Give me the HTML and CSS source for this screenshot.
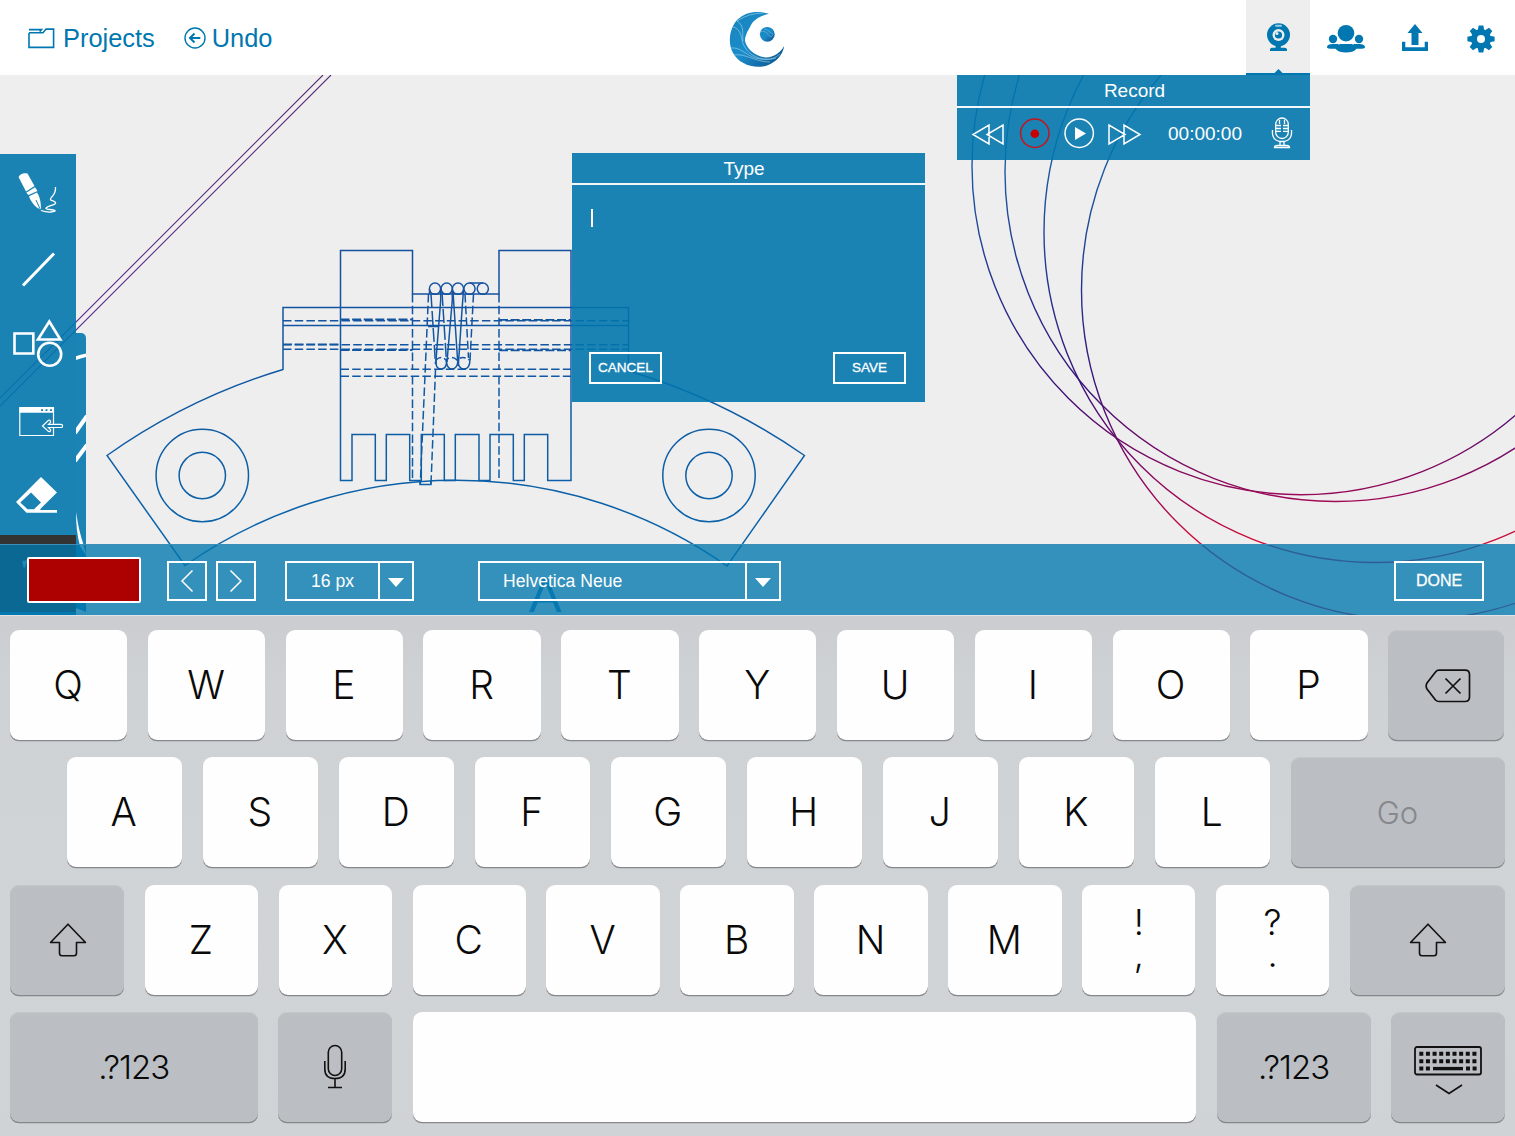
FILE: index.html
```html
<!DOCTYPE html>
<html lang="en">
<head>
<meta charset="utf-8">
<title>Sketch board</title>
<link rel="stylesheet" href="styles.css">
</head>
<body>
<header class="topbar">
  <nav class="nav">
    <a class="nav-link projects"><svg width="27" height="21" viewBox="0 0 27 21" fill="none" stroke="currentColor" stroke-width="1.6"><path d="M1 5v14.4h24.6V1.1h-7.5L15 4.700H1M1 1.600h12.500l-1.800 2"/></svg><span>Projects</span></a>
    <a class="nav-link undo"><svg width="22" height="22" viewBox="0 0 22 22" fill="none" stroke="currentColor" stroke-width="1.4"><circle cx="11" cy="11" r="10"/><path d="M16.300 11H6.500M10.500 6.500 6 11l4.500 4.500" stroke-width="2"/></svg><span>Undo</span></a>
  </nav>
  <svg class="logo" width="56" height="56" viewBox="728 12 56 56">
    <defs><linearGradient id="moon" x1="0" y1="0" x2="1" y2="1"><stop offset="0" stop-color="#1784bb"/><stop offset=".5" stop-color="#1b8ccb"/><stop offset="1" stop-color="#0c4f86"/></linearGradient></defs>
    <path d="M768 13.800C760 15.500 753 19 750 25C747 31 744 35 744 41C746 50 756 57 765 57.500C773 57 779 53 783.200 46C782 54 776 62 766 65.500C753 69.500 738 64 732 53C726 42 729 27 737 19C746 11 758 10.500 768 13.800Z" fill="url(#moon)"/>
    <path d="M732 27c6 1 8 7 9 13 2 10 10 17 21 19 8 1 12-1 17-5M736 21c8 5 5 13 6 20M736 21q12-8 26-8M730 48c9-1 14 6 22 9 7 3 16 3 23 1M733 55c11-2 21 7 36 7" fill="none" stroke="#a5d6ee" stroke-width=".6"/>
    <circle cx="766.300" cy="34.300" r="7.400" fill="url(#moon)"/>
    <path d="M760 31.500c5-1 6 2 8 4s3 1 4-1M763 29c4 0 6 4 9 5" fill="none" stroke="#8ec8e5" stroke-width=".5"/>
  </svg>
  <div class="actions">
    <a class="action active"><svg width="64" height="75" viewBox="1246 0 64 75" fill="currentColor"><path d="M1270 51v-1.500q0-1.800 2-1.800h3.600V46h5.200v1.700h3.600q2.600 0 2.600 1.800V51z"/><circle cx="1278.500" cy="34.800" r="11.500"/><rect x="1275" y="24.800" width="7" height="2" rx="1" fill="#9fcbe2"/><circle cx="1278.500" cy="35" r="6" fill="#eee"/><circle cx="1278.500" cy="35" r="3.600"/><circle cx="1277" cy="33.500" r="1.500" fill="#eee"/><path d="M1274 73.500 1278.500 69l4.500 4.500zM1246 73h64v2h-64z"/></svg></a>
    <a class="action people"><svg width="40" height="30" viewBox="1326 24 40 30" fill="currentColor"><circle cx="1346" cy="33.200" r="8.300"/><circle cx="1333" cy="39" r="4.200"/><circle cx="1359" cy="39" r="4.200"/><path d="M1327 47.500c0-3 3-3.500 7-3.500h24c4 0 7 .5 7 3.500 0 1.200-4 1.500-8.500 1.200-2 2.800-6 3.800-10.500 3.800s-8.500-1-10.500-3.800c-4.500.3-8.500 0-8.500-1.200z"/><path d="M1337 42.500q3 1 2 2.500M1355 42.500q-3 1-2 2.500" fill="none" stroke="#fff" stroke-width=".7"/></svg></a>
    <a class="action upload"><svg width="28" height="30" viewBox="0 0 28 30" fill="currentColor"><path d="M14 1 21.500 10h-4v12h-7V10h-4z"/><path d="M1 18.700h3.300v5.500h19.400v-5.500H27V28H1z"/></svg></a>
    <a class="action gear"><svg width="28" height="28" viewBox="-14 -14 28 28" fill="currentColor"><path d="M-2.300-13.600h4.600l1 5h-6.600zM-2.300 13.600h4.600l1-5h-6.600z"/><path d="M-2.300-13.600h4.600l1 5h-6.600zM-2.300 13.600h4.600l1-5h-6.600z" transform="rotate(45)"/><path d="M-2.300-13.600h4.600l1 5h-6.600zM-2.300 13.600h4.600l1-5h-6.600z" transform="rotate(90)"/><path d="M-2.300-13.600h4.600l1 5h-6.600zM-2.300 13.600h4.600l1-5h-6.600z" transform="rotate(135)"/><circle r="10"/><circle r="4" fill="#fff"/></svg></a>
  </div>
</header>

<main class="board">
  <svg class="drawing" width="1515" height="540" viewBox="0 75 1515 540" fill="none">
    <defs>
      <linearGradient id="ring" gradientUnits="userSpaceOnUse" x1="0" y1="75" x2="0" y2="615"><stop offset="0" stop-color="#0a6fb0"/><stop offset=".2" stop-color="#1c55a0"/><stop offset=".42" stop-color="#272f8b"/><stop offset=".58" stop-color="#3b1278"/><stop offset=".68" stop-color="#6b0a68"/><stop offset=".78" stop-color="#990a58"/><stop offset=".86" stop-color="#cf0d38"/><stop offset="1" stop-color="#d00030"/></linearGradient>
      <linearGradient id="diag" gradientUnits="userSpaceOnUse" x1="0" y1="406" x2="0" y2="75"><stop offset="0" stop-color="#1464a8"/><stop offset=".25" stop-color="#5b2a90"/><stop offset="1" stop-color="#54286e"/></linearGradient>
      <linearGradient id="plan" gradientUnits="userSpaceOnUse" x1="0" y1="250" x2="0" y2="560"><stop offset="0" stop-color="#174f9f"/><stop offset=".5" stop-color="#0f5aa3"/><stop offset="1" stop-color="#0a65aa"/></linearGradient>
    </defs>
    <g stroke="url(#ring)" stroke-width="1.4"><circle cx="1301" cy="165.700" r="329"/><circle cx="1335" cy="171.500" r="330"/><circle cx="1374.500" cy="232" r="330.500"/><circle cx="1411.500" cy="290" r="330"/></g>
    <path d="M0 398 323 75M0 406 331 75" stroke="url(#diag)" stroke-width="1.100"/>
    <g stroke="url(#plan)" stroke-width="1.500">
      <path d="M283 369.500A608 608 0 0 0 107 455.500L185 565.500A472 472 0 0 1 727 566L804.500 455.500A608 608 0 0 0 628.500 371V307.500H283V370M283 325.500H628.500"/>
      <circle cx="202.300" cy="475.500" r="46.200"/><circle cx="202.300" cy="475.500" r="23.200"/><circle cx="709" cy="475.500" r="46.200"/><circle cx="709" cy="475.500" r="23.200"/>
      <path d="M340.500 480.500V250.500H412.500V294H499V250.500H571V480.500H547.700V434.500H524.300V480.500H513.300V434.500H490V480.500H479V434.500H455.300V480.500H444.300V434.500H421.300V480.500H409.700V434.500H386.300V480.500H375.300V434.500H352V480.500Z"/>
      <path d="M283 320.800H628.500M283 344.800H628.500M283 349.200H628.500M340.500 369.300H571M340.500 376.300H571M412.500 294V369M499 294V369M412.500 376V481M499 376V481" stroke-dasharray="8.500 3.200"/>
      <path d="M340.500 319.500H412.500M499 319.800H571M340.500 350H412.500M499 350.300H571M283 344.300H340" stroke-width="1.800" stroke-dasharray="9 2.600"/>
      <circle cx="435" cy="288.700" r="5.600"/><circle cx="446.700" cy="288.700" r="5.600"/><circle cx="458" cy="288.700" r="5.600"/><circle cx="469.500" cy="288.700" r="5.600"/><circle cx="482.800" cy="288.700" r="5.600"/><path d="M469.500 283H482.800M428 326.500H438M429.500 289v5"/>
      <path d="M440.700 290V300L435.700 364M452.300 290V300L447 362M463.500 290 462 310 458.300 366M453 292 458 366"/>
      <path d="M431 294 435.500 364M442 292 446.500 362" stroke-dasharray="14 3"/>
      <path d="M428.500 294 420.300 484M473.500 294 470 360M465 294 468.500 358M435.500 370 431 484" stroke-dasharray="8.500 3.200"/>
      <path d="M420 482V484.500H431V481M436 359q-1 10 5 10t5.500-9q0 9 5.500 9t6-9q0 9 6 9t6-10"/><path d="M436 360q5-5 10 0 6-5 11 0 6-5 12 0" stroke-dasharray="6 3"/>
    </g>
    <text class="ghost" x="529" y="611.500">A</text>
  </svg>

  <div class="drawer"><svg width="10" height="279" viewBox="76 333 10 279" fill="none" stroke="#fff" stroke-width="4"><path d="M75 358.500Q80 356.500 87 355" stroke-width="3.500"/><path d="M75 433 87 416M75 461 87 445"/><path d="M76 512C78 524 79 530 83 543L86 555 80 546C77 535 76 524 76 512z" fill="#fff" stroke="none"/><path d="M75 610Q80 612 86 614"/></svg></div>
  <aside class="rail">
    <svg class="tool" viewBox="0 154 76 76"><path d="M18.500 177C20 173.500 24 172.500 27.500 173.500L34.500 186 26 191.500zM26.300 192.700 35 187.200 37.500 191 28.500 195zM29 196.200 37 192.500C40 197 41 202 41 210 35 207 31 202 29 196.200z" fill="#fff"/><path d="M40.500 210 36 200" stroke="#1b84b5" fill="none"/><path d="M41 210.500C48 213 56 212 55 210.500 53 209 45 210 46 208 48 205 58 205 55 202 53 200 49 201 51 198 53 195 56 194 55.500 187" fill="none" stroke="#fff" stroke-width="1.300"/></svg>
    <svg class="tool" viewBox="0 230 76 76"><path d="M23 285.500 54 253.500" stroke="#fff" stroke-width="3"/></svg>
    <svg class="tool" viewBox="0 306 76 76" fill="none" stroke="#fff" stroke-width="2.600"><path d="M14.500 333.500h18.800v20H14.500z"/><path d="M49.300 321.500 60.300 339.500H38z"/><circle cx="49.700" cy="354.300" r="11.500"/></svg>
    <svg class="tool" viewBox="0 382 76 76" fill="none" stroke="#fff" stroke-width="1.200"><path d="M53.500 424V407.600H19.800V435.500H53.500V428"/><path d="M19.500 407.500h34.300v5.300H19.500z" fill="#fff" stroke="none"/><path d="M41 410.200h2m2.500 0h2m2.500 0h2" stroke="#1b84b5" stroke-width="1.800"/><path d="M42.500 426 48.500 420.300q2.500-.5 2 2l-2 2H61q1.600 0 1.600 1.600T61 427.500H48.500l2 2q.5 2.500-2 2z"/></svg>
    <svg class="tool" viewBox="0 458 76 76"><path d="M41 477 57 492.500 41 508.200 40 510H57V512.800H26.500L16 502zM31 492.500 20.300 502.500 27.500 509.300H34L41 502.500z" fill="#fff" fill-rule="evenodd"/></svg>
    <div class="rail-well"><svg width="8" height="10" viewBox="0 0 8 10"><path d="M1 1 7 0 3 9z" fill="#8cc4de"/></svg></div>
  </aside>

  <section class="panel record">
    <h2 class="panel-title">Record</h2>
    <div class="transport">
      <svg width="196" height="51" viewBox="957 108 196 51" fill="none" stroke="#fff" stroke-width="1.500"><path d="M989 125V144L973 134.500zM1003 125V144L987 134.500zM1109 125V144L1125 134.500zM1124 125V144L1140 134.500z"/><circle cx="1034.800" cy="133.300" r="14.200" stroke="#c4141c"/><circle cx="1034.800" cy="133.800" r="4.300" fill="#c80000" stroke="none"/><circle cx="1079.200" cy="133.300" r="14.200"/><path d="M1075 127V140L1086 133.500z" fill="#fff" stroke="none"/></svg>
      <time class="clock">00:00:00</time>
      <svg class="mic" width="22" height="32" viewBox="0 0 22 32" fill="none" stroke="#fff" stroke-width="1.300"><rect x="4.700" y="1" width="12.600" height="20.500" rx="6.300"/><path d="M1.500 13q-1 11.500 9.500 11.500T20.500 13M9 24.500v4M13 24.500v4M3.500 30.500q0-2 3-2h9q3 0 3 2z"/><path d="M5 8.500h5M12 8.500h5M5 11.500h5M12 11.500h5M5 14.300h5M12 14.300h5M8.500 3v4M13.500 3v4"/></svg>
    </div>
  </section>

  <section class="panel type">
    <h2 class="panel-title">Type</h2>
    <div class="type-body"><i class="caret"></i><div class="type-buttons"><button class="btn">CANCEL</button><button class="btn">SAVE</button></div></div>
  </section>

  <div class="format">
    <span class="swatch"></span>
    <button class="step prev"><svg width="14" height="24" viewBox="0 0 14 24"><path d="M12.500 1.500 2 12 12.500 22.500" fill="none" stroke="#fff" stroke-width="1.500"/></svg></button>
    <button class="step"><svg width="14" height="24" viewBox="0 0 14 24"><path d="M1.500 1.500 12 12 1.500 22.500" fill="none" stroke="#fff" stroke-width="1.500"/></svg></button>
    <div class="select size"><span>16 px</span><i class="drop"></i></div>
    <div class="select font"><span>Helvetica Neue</span><i class="drop"></i></div>
    <button class="done">DONE</button>
  </div>
</main>

<section class="keyboard">
  <div class="row">
    <b class="key">Q</b><b class="key">W</b><b class="key">E</b><b class="key">R</b><b class="key">T</b><b class="key">Y</b><b class="key">U</b><b class="key">I</b><b class="key">O</b><b class="key">P</b>
    <b class="key dark"><svg class="backspace" width="46" height="34" viewBox="0 0 46 34" fill="none" stroke="#111" stroke-width="1.700"><path d="M14 1.200H40Q44.500 1.200 44.500 5.500V28Q44.500 32.500 40 32.500H14Q12 32.500 10.500 31L2 20Q.3 17 2 14L10.500 3Q12 1.200 14 1.200zM20.500 9.500 35.500 24.500M35.500 9.500 20.500 24.500"/></svg></b>
  </div>
  <div class="row home">
    <b class="key">A</b><b class="key">S</b><b class="key">D</b><b class="key">F</b><b class="key">G</b><b class="key">H</b><b class="key">J</b><b class="key">K</b><b class="key">L</b><b class="key dark go">Go</b>
  </div>
  <div class="row lower">
    <b class="key dark shift"><svg width="38" height="34" viewBox="0 0 38 34" fill="none" stroke="#111" stroke-width="1.600" stroke-linejoin="round"><path d="M19 1.200 36.500 19.500H27.500V30Q27.500 32.700 25 32.700H13Q10.500 32.700 10.500 30V19.500H1.500z"/></svg></b>
    <b class="key">Z</b><b class="key">X</b><b class="key">C</b><b class="key">V</b><b class="key">B</b><b class="key">N</b><b class="key">M</b>
    <b class="key pair"><span>!</span><span>,</span></b><b class="key pair"><span>?</span><span>.</span></b>
    <b class="key dark shift wide"><svg width="38" height="34" viewBox="0 0 38 34" fill="none" stroke="#111" stroke-width="1.600" stroke-linejoin="round"><path d="M19 1.200 36.500 19.500H27.500V30Q27.500 32.700 25 32.700H13Q10.500 32.700 10.500 30V19.500H1.500z"/></svg></b>
  </div>
  <div class="row base">
    <b class="key dark num">.?123</b>
    <b class="key dark voice"><svg width="24" height="46" viewBox="0 0 24 46" fill="none" stroke="#111" stroke-width="1.600"><rect x="5.300" y="1.500" width="13.400" height="30" rx="6.700"/><path d="M1.800 17V25Q1.800 34.500 12 34.500T22.200 25V17M12 34.500V43.500M5 43.500H19"/></svg></b>
    <b class="key space"></b>
    <b class="key dark num right">.?123</b>
    <b class="key dark hide"><svg width="68" height="50" viewBox="0 0 68 50"><rect x="1" y="2" width="66" height="27.500" rx="2" fill="none" stroke="#111" stroke-width="1.800"/><path d="M5.300 8.800H62.500M5.300 16.200H62.500" stroke="#111" stroke-width="4" stroke-dasharray="4 2.640"/><path d="M5.300 23.600h4m2.600 0h4M52 23.600h4m2.600 0h4" stroke="#111" stroke-width="4"/><path d="M19 23.600H49" stroke="#111" stroke-width="3.400"/><path d="M22 40 35 48.500 48 40" fill="none" stroke="#111" stroke-width="1.700"/></svg></b>
  </div>
</section>
</body>
</html>
```
FILE: styles.css
```css
* { box-sizing: border-box; }
body { margin: 0; width: 1515px; height: 1136px; overflow: hidden; font-family: "Liberation Sans", Arial, sans-serif; background: #eee; }
svg { display: block; flex: none; }
button { background: none; border: 2px solid #fff; color: #fff; font: inherit; padding: 0; display: flex; align-items: center; justify-content: center; }

.topbar { height: 75px; background: #fff; color: #0077b0; display: grid; grid-template-columns: 1fr 56px 1fr; align-items: center; }
.nav { display: flex; gap: 29px; padding-left: 28px; padding-top: 2px; font-size: 25.400px; }
.nav-link { display: flex; align-items: center; gap: 8px; height: 30px; }
.undo { gap: 6px; }
.undo svg { margin-top: -1px; }
.projects svg { margin-top: -1px; }
.logo { margin-top: 4px; margin-left: -1px; }
.actions { display: flex; justify-content: flex-end; height: 75px; }
.action { display: flex; align-items: center; justify-content: center; width: 64px; padding-top: 3px; }
.action.active { background: #eee; padding: 0; }
.people { width: 72px; }
.upload { width: 65px; padding-top: 0; }
.gear { width: 68px; }

.board { position: relative; height: 540px; background: #eee; overflow: hidden; }
.drawing { width: 1515px; height: 540px; }
.ghost { font-size: 49px; fill: #1b82b8; }
.drawer { position: absolute; left: 76px; top: 258px; width: 10px; height: 279px; background: #1b84b5; border-radius: 0 5px 0 0; overflow: hidden; }
.rail { position: absolute; left: 0; top: 79px; width: 76px; height: 461px; background: rgba(0, 117, 173, .885); display: flex; flex-direction: column; }
.tool { width: 76px; height: 76px; }
.rail-well { height: 77px; margin-top: 1px; background: #333; padding: 25px 0 0 21px; }

.panel { position: absolute; width: 353px; background: rgba(0, 117, 173, .885); color: #fff; display: flex; flex-direction: column; }
.panel-title { margin: 0; height: 33px; line-height: 32px; border-bottom: 2px solid #f4f8fa; font-weight: 400; font-size: 19px; text-align: center; }
.record { left: 957px; top: 0; height: 84.500px; }
.record .panel-title { padding-left: 2px; }
.transport { display: flex; align-items: center; height: 51px; }
.clock { width: 105px; padding-left: 15px; font-size: 19px; line-height: 24px; }
.mic { margin-left: 13px; margin-top: -2px; }
.type { left: 571.500px; top: 78px; height: 248.500px; }
.type .panel-title { height: 32px; padding-right: 8px; }
.type-body { flex: 1; display: flex; flex-direction: column; justify-content: space-between; padding: 24px 18.500px 18px 17.500px; }
.caret { width: 2px; height: 18px; margin-left: 2px; background: #fff; }
.type-buttons { display: flex; justify-content: space-between; }
.btn { width: 73px; height: 32px; font-size: 13.500px; -webkit-text-stroke: .3px #fff; }

.format { position: absolute; left: 0; right: 0; bottom: 0; height: 71px; padding: 2px 31px 0 27px; background: rgba(0, 118, 173, .786); border-top: 1px solid #3b8fb6; display: flex; align-items: center; color: #fff; }
.swatch { width: 114px; height: 46px; margin-bottom: 2px; background: #ad0000; border: 2px solid #fff; border-radius: 2px; }
.step { width: 40px; height: 40px; margin-left: 9px; }
.step.prev { margin-left: 26px; }
.select { display: flex; height: 40px; border: 2px solid #fff; font-size: 17.600px; line-height: 36px; }
.select span { flex: 1; }
.size { width: 129px; margin-left: 29px; text-align: center; }
.font { width: 303px; margin-left: 64px; }
.font span { padding-left: 23px; }
.drop { width: 34px; border-left: 2px solid #fff; display: flex; align-items: center; justify-content: center; }
.drop::before { content: ""; border: 8px solid transparent; border-top: 9px solid #fff; border-bottom: 0; margin-top: 2px; }
.done { width: 90px; height: 40px; margin-left: auto; font-size: 16px; -webkit-text-stroke: .3px #fff; }

.keyboard { height: 521px; padding: 15px 10.500px 0; background: linear-gradient(#cbcccf, #ced2d5 12%, #d0d4d7 60%, #cfd3d6); display: flex; flex-direction: column; gap: 17.300px; box-shadow: inset 0 1px #e0e4e6; }
.row { display: flex; gap: 20.500px; height: 110px; margin-left: -.5px; }
.key { flex: 1 1 0; display: flex; align-items: center; justify-content: center; height: 110px; border-radius: 9px; background: #fefefe; box-shadow: 0 1.300px 0 #85888c; font-family: Inter, "Liberation Sans", sans-serif; font-variation-settings: "opsz" 14; font-weight: 300; font-size: 39px; color: #0a0a0a; }
.key.dark { background: #bbbec2; box-shadow: 0 1.300px 0 #84878b, inset 0 1px #c5c8cb; }
.row .key:not(.pair):not(.num):not(.dark) { padding-right: 1px; padding-bottom: 1px; }
.home { padding-left: 56.500px; }
.home .key { flex: 0 0 115.500px; }
.home .key.go { flex: 1; color: #85888c; font-size: 31px; }
.lower .key, .base .key { flex: 0 0 113.400px; }
.lower .key.shift { flex-basis: 114.300px; padding: 0 0 0 2px; }
.lower .key.wide { flex: 1; }
.key.pair { flex-direction: column; line-height: 32px; font-size: 36px; padding-bottom: 3px; }
.base .key.num { flex-basis: 247.500px; font-size: 33px; letter-spacing: -1px; }
.base .key.voice { flex-basis: 114px; }
.base .key.right { flex-basis: 154px; }
.base .key.space { flex: 1; }
.hide svg { margin-top: 6px; }
.backspace { margin: 2px 0 0 3px; }
```
